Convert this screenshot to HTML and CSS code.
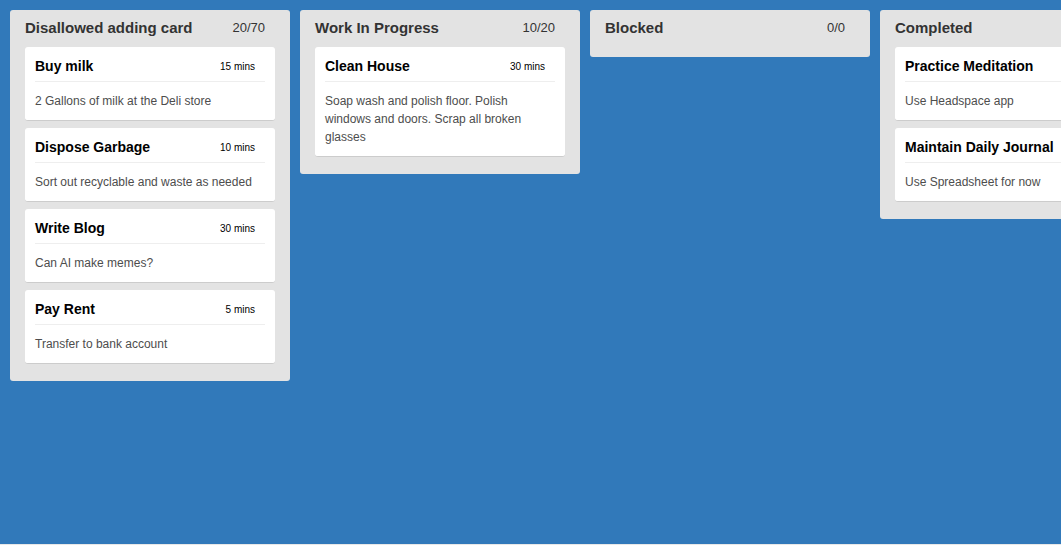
FILE: index.html
```html
<!DOCTYPE html>
<html>
<head>
<meta charset="utf-8">
<link rel="stylesheet" href="styles.css">
</head>
<body>
<div class="board">
  <section class="lane">
    <header class="lane-header">
      <span class="lane-title">Disallowed adding card</span>
      <span class="lane-count">20/70</span>
    </header>
    <div class="lane-cards">
      <article class="card">
        <header class="card-header"><span class="card-title">Buy milk</span><span class="card-right">15 mins</span></header>
        <div class="card-detail">2 Gallons of milk at the Deli store</div>
      </article>
      <article class="card">
        <header class="card-header"><span class="card-title">Dispose Garbage</span><span class="card-right">10 mins</span></header>
        <div class="card-detail">Sort out recyclable and waste as needed</div>
      </article>
      <article class="card">
        <header class="card-header"><span class="card-title">Write Blog</span><span class="card-right">30 mins</span></header>
        <div class="card-detail">Can AI make memes?</div>
      </article>
      <article class="card">
        <header class="card-header"><span class="card-title">Pay Rent</span><span class="card-right">5 mins</span></header>
        <div class="card-detail">Transfer to bank account</div>
      </article>
    </div>
  </section>
  <section class="lane">
    <header class="lane-header">
      <span class="lane-title">Work In Progress</span>
      <span class="lane-count">10/20</span>
    </header>
    <div class="lane-cards">
      <article class="card">
        <header class="card-header"><span class="card-title">Clean House</span><span class="card-right">30 mins</span></header>
        <div class="card-detail">Soap wash and polish floor. Polish windows and doors. Scrap all broken glasses</div>
      </article>
    </div>
  </section>
  <section class="lane">
    <header class="lane-header">
      <span class="lane-title">Blocked</span>
      <span class="lane-count">0/0</span>
    </header>
    <div class="lane-cards"></div>
  </section>
  <section class="lane">
    <header class="lane-header">
      <span class="lane-title">Completed</span>
      <span class="lane-count">2/5</span>
    </header>
    <div class="lane-cards">
      <article class="card">
        <header class="card-header"><span class="card-title">Practice Meditation</span><span class="card-right">15 mins</span></header>
        <div class="card-detail">Use Headspace app</div>
      </article>
      <article class="card">
        <header class="card-header"><span class="card-title">Maintain Daily Journal</span><span class="card-right">15 mins</span></header>
        <div class="card-detail">Use Spreadsheet for now</div>
      </article>
    </div>
  </section>
</div>
</body>
</html>
```

FILE: styles.css
```css
html, body {
  margin: 0;
  padding: 0;
  background: #e8e8e8;
  overflow: hidden;
}
body {
  font-family: "Liberation Sans", Arial, Helvetica, sans-serif;
}
.board {
  box-sizing: border-box;
  height: 544px;
  background: #3179ba;
  padding: 5px;
  display: flex;
  flex-direction: row;
  align-items: flex-start;
  overflow: hidden;
}
.lane {
  flex: 0 0 auto;
  box-sizing: border-box;
  width: 280px;
  margin: 5px;
  padding: 9px 15px 10px;
  background: #e3e3e3;
  border-radius: 3px;
  display: flex;
  flex-direction: column;
}
.lane-header {
  display: flex;
  justify-content: space-between;
  align-items: flex-start;
  height: 18px;
  line-height: 18px;
}
.lane-title {
  font-size: 15px;
  font-weight: bold;
  color: #333;
}
.lane-count {
  font-size: 13px;
  color: #333;
  padding-right: 10px;
}
.lane-cards {
  margin-top: 10px;
  display: flex;
  flex-direction: column;
}
.card {
  box-sizing: border-box;
  width: 250px;
  background: #fff;
  border-radius: 3px;
  border-bottom: 1px solid #ccc;
  padding: 10px;
  margin-bottom: 7px;
}
.card-header {
  display: flex;
  justify-content: space-between;
  align-items: center;
  height: 18px;
  padding-bottom: 6px;
  border-bottom: 1px solid #eee;
  color: #000;
}
.card-title {
  font-size: 14px;
  font-weight: bold;
  white-space: nowrap;
}
.card-right {
  font-size: 10px;
  padding-right: 10px;
  white-space: nowrap;
}
.card-detail {
  margin-top: 10px;
  font-size: 12px;
  line-height: 18px;
  color: #4d4d4d;
}
```
